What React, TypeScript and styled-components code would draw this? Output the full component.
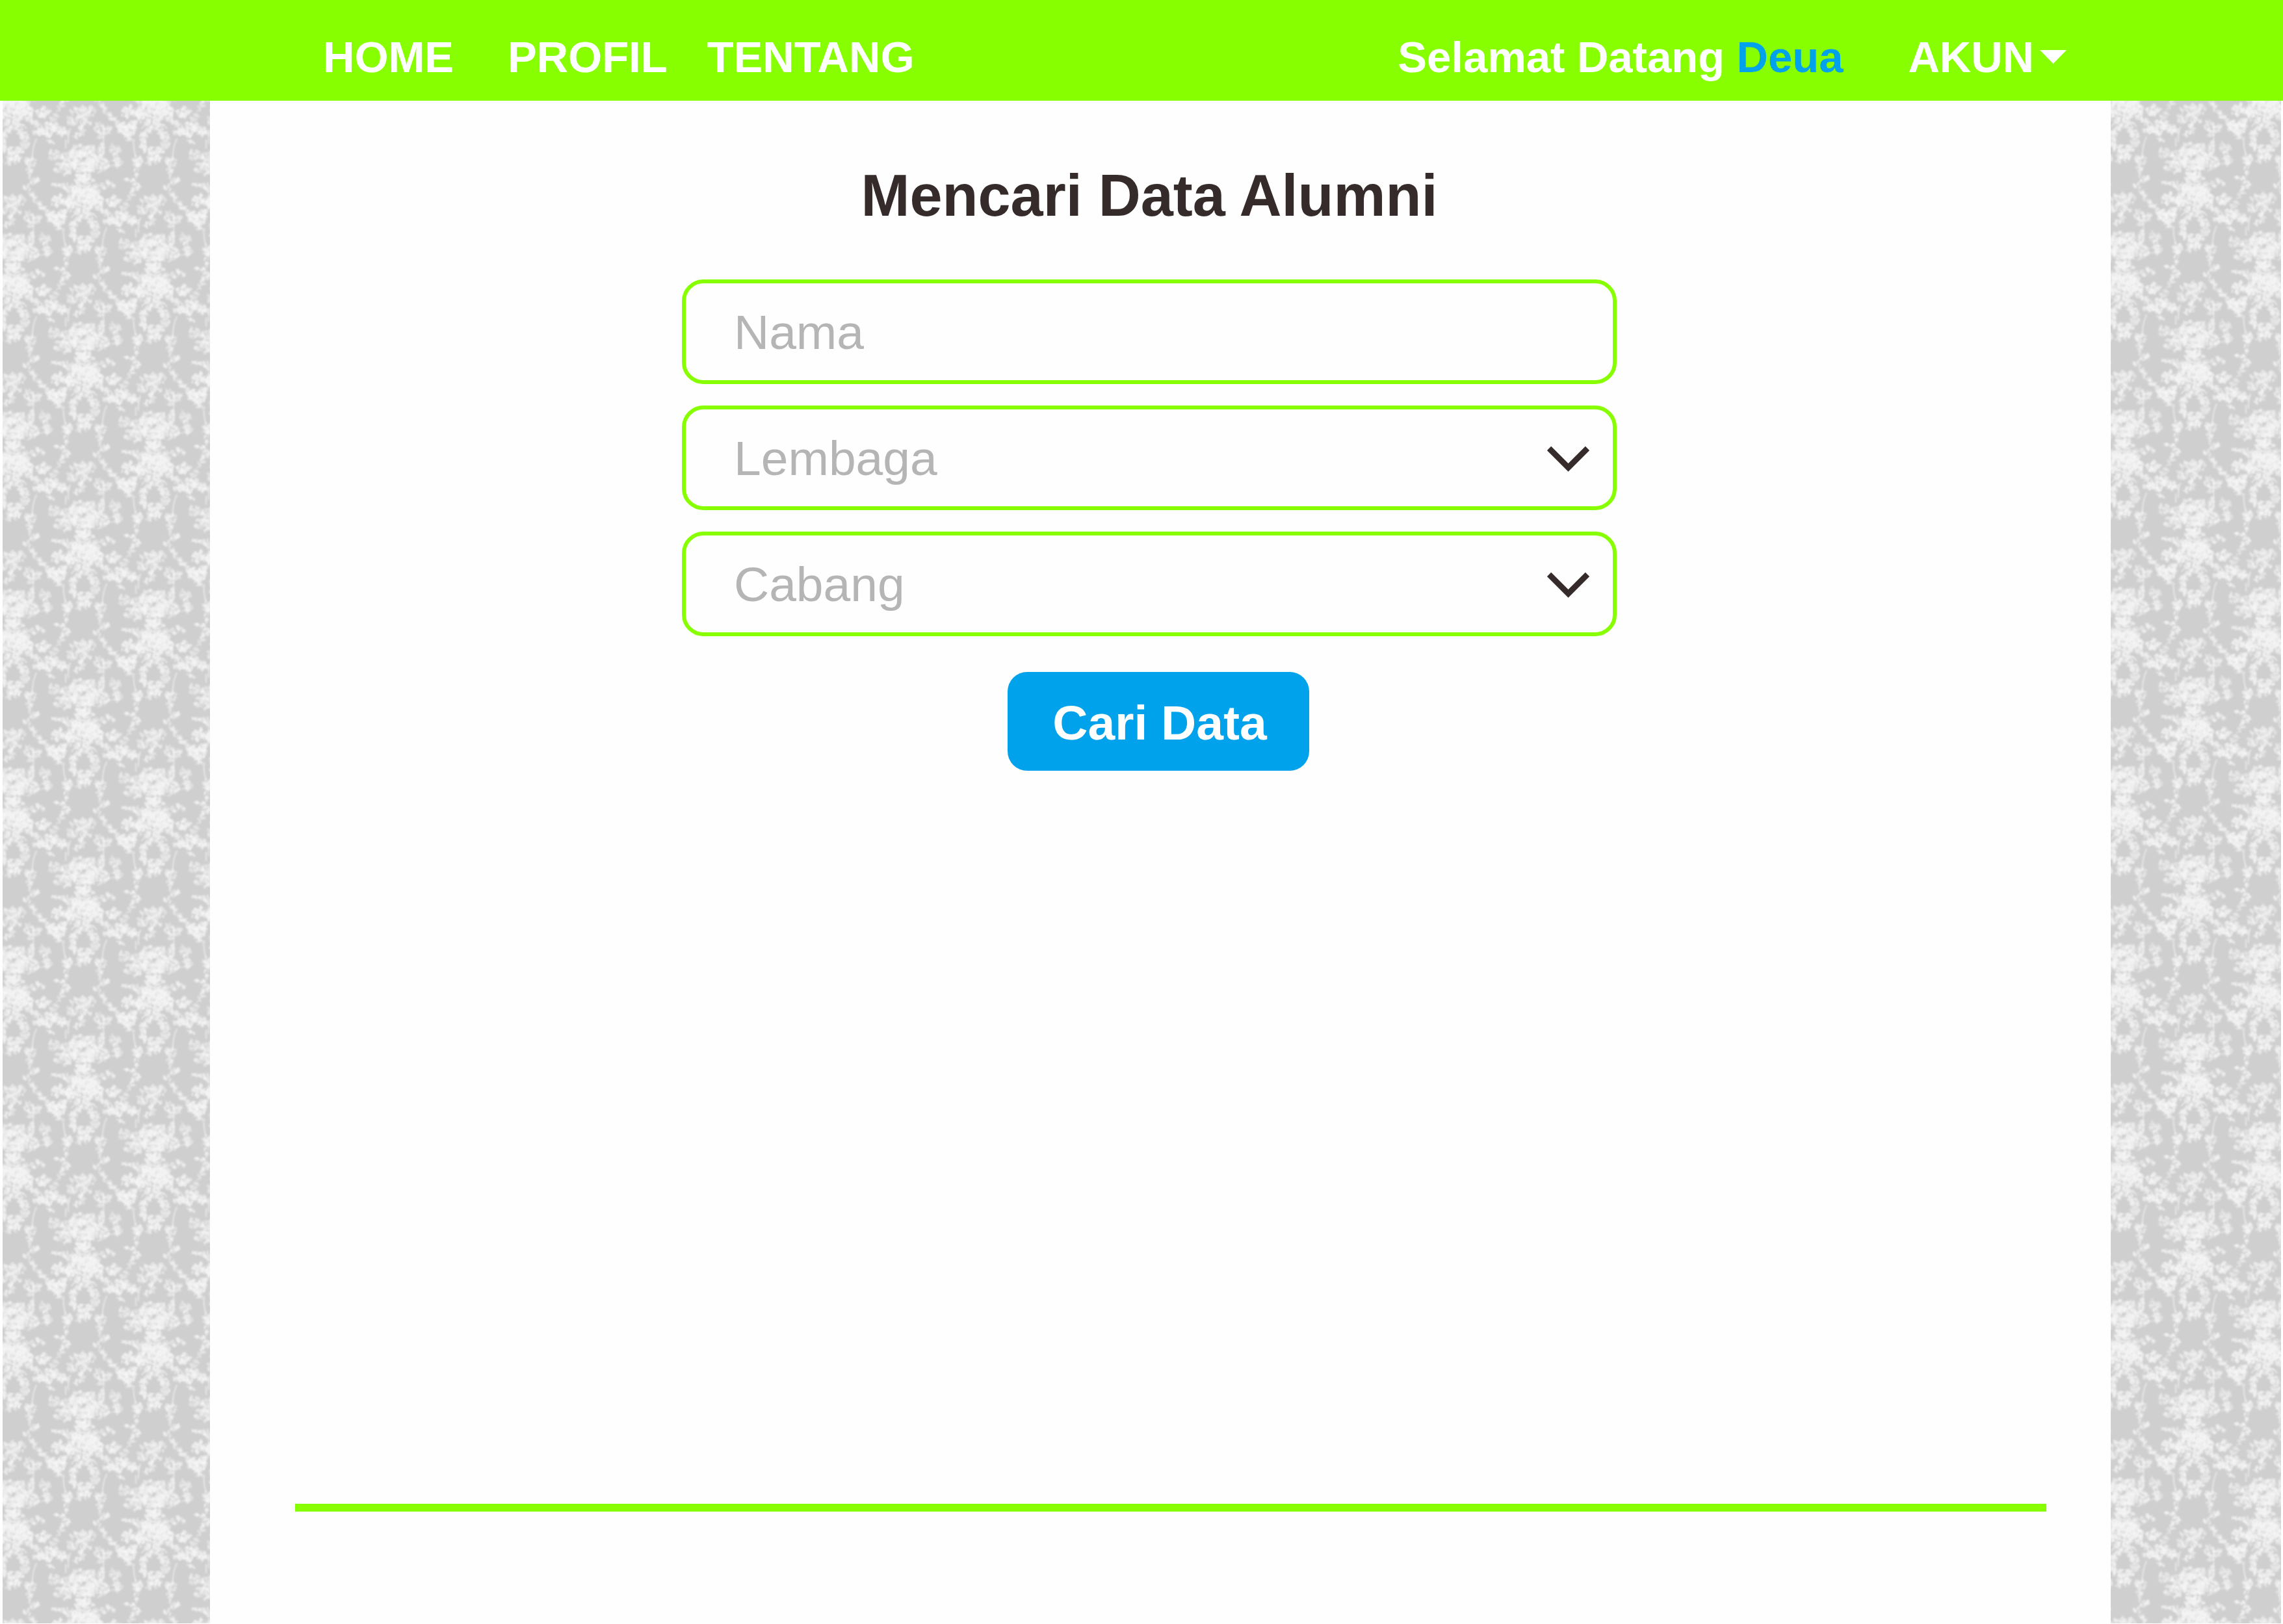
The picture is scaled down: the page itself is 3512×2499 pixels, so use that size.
import React, { useId } from "react";
import styled, { createGlobalStyle } from "styled-components";

const green = "#88ff00";
const blue = "#00a2ec";
const ink = "#352b2a";
const paper = "#fefefe";

const GlobalStyle = createGlobalStyle`
  *, *::before, *::after { box-sizing: border-box; }
  html, body { margin: 0; padding: 0; background: ${paper}; }
  body, button, input, select { font-family: "Liberation Sans", Arial, sans-serif; }
`;

const Page = styled.div`
  min-height: 100vh;
  display: flex;
  flex-direction: column;
`;

const Header = styled.header`
  display: flex;
  justify-content: space-between;
  align-items: center;
  height: 155px;
  padding: 20px 333px 0 497px;
  background: ${green};
  color: #ffffff;
  font-size: 67px;
  line-height: 76px;
  font-weight: 700;
`;

const Nav = styled.nav`
  display: flex;
`;

const NavLink = styled.a<{ $gap: number }>`
  margin-right: ${(p) => p.$gap}px;
  color: inherit;
  text-decoration: none;
`;

const Account = styled.div`
  display: flex;
  align-items: center;
  gap: 100px;
`;

const Greeting = styled.p`
  margin: 0;
  white-space: nowrap;
`;

const UserName = styled.span`
  color: ${blue};
`;

const AccountButton = styled.button`
  display: flex;
  align-items: center;
  gap: 9px;
  padding: 0;
  border: 0;
  background: none;
  color: inherit;
  font-size: inherit;
  font-weight: inherit;
  line-height: inherit;
  cursor: pointer;
`;

const Caret = styled.svg`
  display: block;
  width: 41px;
  height: 21px;
`;

const Body = styled.div`
  flex: 1;
  display: grid;
  grid-template-columns: 319px minmax(0, 1fr) 262px;
  padding: 0 3px 1px 4px;
`;

const Wallpaper = styled.div`
  display: grid;
  height: 100%;
  overflow: hidden;
  background: #cfcfcf;
`;

const WallpaperArt = styled.svg`
  display: block;
  width: 100%;
  height: 100%;
`;

const Content = styled.main`
  display: flex;
  flex-direction: column;
  align-items: center;
  padding: 94px 6px 0 0;
`;

const SearchForm = styled.form`
  display: flex;
  flex-direction: column;
  align-items: center;
  width: 100%;
`;

const FormBody = styled.div`
  width: 100%;
  display: flex;
  flex-direction: column;
  align-items: center;
  gap: 33px;
  padding-right: 28px;
`;

const Title = styled.h1`
  margin: 0;
  padding-bottom: 44px;
  color: ${ink};
  font-size: 90px;
  line-height: 104px;
  font-weight: 700;
`;

const Field = styled.div`
  display: grid;
  align-items: center;
  width: 100%;
  max-width: 1438px;
  height: 161px;
`;

const controlStyle = `
  grid-area: 1 / 1;
  width: 100%;
  height: 100%;
  margin: 0;
  padding: 0 74px;
  border: 6px solid ${green};
  border-radius: 33px;
  outline: 0;
  background: transparent;
  font-size: 75px;
`;

const TextInput = styled.input`
  ${controlStyle}
  color: ${ink};
  &::placeholder { color: #b5b5b5; opacity: 1; }
`;

const Select = styled.select`
  ${controlStyle}
  appearance: none;
  color: #b5b5b5;
  cursor: pointer;
`;

const Chevron = styled.svg`
  grid-area: 1 / 1;
  justify-self: end;
  width: 65px;
  height: 42px;
  margin-right: 42px;
  pointer-events: none;
`;

const SubmitButton = styled.button`
  width: 464px;
  height: 152px;
  margin-top: 55px;
  padding: 4px 0 0 4px;
  border: 0;
  border-radius: 30px;
  background: ${blue};
  color: #ffffff;
  font-size: 75px;
  font-weight: 700;
  cursor: pointer;
`;

const Footer = styled.footer`
  align-self: stretch;
  margin-top: auto;
  padding: 0 93px 172px 131px;
`;

const FooterRule = styled.hr`
  height: 12px;
  margin: 0;
  border: 0;
  background: ${green};
`;

type Cluster = [x: number, y: number, rx: number, ry: number, light: number];

/* Flower masses of one bouquet; the tile is 648 by 822 units with a half drop. */
const clusters: Cluster[] = [
  [325, 45, 52, 26, 0.5], [260, 90, 44, 34, 0.5], [240, 135, 26, 26, 0.45],
  [320, 100, 66, 42, 0.6], [385, 110, 52, 38, 0.5], [405, 50, 14, 38, 0.35],
  [468, 48, 22, 26, 0.35], [470, 104, 28, 26, 0.4], [204, 128, 24, 20, 0.45],
  [172, 58, 14, 10, 0.5], [200, 66, 12, 16, 0.5], [182, 88, 16, 10, 0.5],
  [325, 160, 34, 26, 0.6], [325, 215, 52, 46, 0.75], [325, 262, 66, 34, 0.75],
  [322, 292, 84, 22, 0.7], [252, 300, 20, 32, 0.55], [398, 296, 20, 36, 0.55],
  [270, 240, 18, 34, 0.5], [384, 240, 18, 34, 0.5], [325, 335, 42, 28, 0.55],
  [190, 207, 14, 5, 0.5], [220, 210, 16, 6, 0.5], [243, 216, 12, 16, 0.5],
  [415, 216, 16, 14, 0.45], [440, 200, 14, 12, 0.5], [460, 210, 10, 6, 0.5],
  [200, 285, 26, 26, 0.75], [220, 268, 12, 14, 0.6], [455, 285, 24, 26, 0.75],
  [480, 288, 12, 14, 0.5], [176, 358, 28, 28, 0.9], [212, 366, 28, 28, 0.85],
  [196, 392, 22, 14, 0.7], [225, 335, 18, 18, 0.5], [440, 375, 24, 16, 0.8],
  [480, 358, 30, 26, 0.9], [478, 388, 18, 12, 0.7], [425, 335, 18, 16, 0.5],
  [514, 350, 14, 22, 0.5], [545, 372, 20, 18, 0.5], [570, 380, 9, 7, 0.4],
  [495, 420, 12, 12, 0.45], [216, 415, 14, 10, 0.4],
  [276, 400, 17, 22, 0.65], [274, 432, 17, 20, 0.65], [296, 458, 20, 16, 0.65],
  [325, 468, 22, 20, 0.7], [354, 458, 20, 16, 0.65], [376, 432, 17, 20, 0.65],
  [374, 400, 17, 22, 0.65], [356, 374, 16, 14, 0.5], [294, 374, 16, 14, 0.5],
  [325, 492, 28, 14, 0.6], [302, 512, 14, 12, 0.6], [340, 508, 14, 16, 0.6],
  [245, 510, 24, 22, 0.6], [243, 545, 12, 18, 0.55], [242, 575, 6, 10, 0.5],
  [200, 592, 14, 6, 0.5], [224, 606, 18, 12, 0.55], [250, 628, 12, 16, 0.5],
  [232, 640, 14, 8, 0.4], [222, 662, 10, 12, 0.5], [208, 684, 9, 14, 0.5],
  [196, 708, 12, 10, 0.5], [180, 728, 14, 12, 0.5],
  [401, 510, 22, 24, 0.6], [398, 545, 14, 16, 0.55], [396, 575, 8, 12, 0.5],
  [440, 594, 16, 7, 0.5], [412, 606, 20, 14, 0.55], [386, 630, 14, 12, 0.5],
  [404, 654, 12, 14, 0.5], [420, 680, 9, 14, 0.5], [436, 708, 12, 12, 0.5],
  [456, 728, 16, 12, 0.5], [476, 742, 10, 8, 0.4],
  [285, 688, 24, 14, 0.5], [320, 678, 14, 16, 0.5], [350, 690, 24, 22, 0.5],
  [318, 704, 24, 14, 0.45], [270, 732, 26, 20, 0.45], [334, 740, 24, 18, 0.6],
  [302, 728, 18, 12, 0.4], [308, 782, 20, 22, 0.55], [290, 800, 16, 14, 0.45],
  [395, 768, 22, 24, 0.35], [432, 776, 20, 18, 0.35], [400, 802, 14, 18, 0.3],
  [210, 776, 14, 14, 0.45], [228, 790, 18, 14, 0.45],
];

const stems = [
  "M230 425 Q230 460 240 490", "M430 405 Q412 440 410 490",
  "M262 770 Q250 800 252 840", "M240 0 V40", "M495 395 L520 340",
  "M150 0 Q170 10 190 20", "M415 770 V880",
  "M350 338 Q370 340 384 360", "M300 338 Q280 340 266 360",
];

function makeRandom(start: number) {
  let state = start;
  return () => {
    state = (state * 1664525 + 1013904223) % 4294967296;
    return state / 4294967296;
  };
}

type Petal = { x: number; y: number; rx: number; ry: number; turn: number; fill: string; alpha: number };

function growPetals(): Petal[] {
  const random = makeRandom(29);
  const petals: Petal[] = [];
  clusters.forEach(([cx, cy, rx, ry, light]) => {
    const count = Math.max(7, Math.round((rx * ry) / 18));
    for (let i = 0; i < count; i += 1) {
      const angle = random() * Math.PI * 2;
      const reach = Math.sqrt(random()) * 1.08;
      const shaded = random() < 0.14;
      petals.push({
        x: Math.round(cx + Math.cos(angle) * reach * rx),
        y: Math.round(cy + Math.sin(angle) * reach * ry),
        rx: shaded ? 6 : 7 + Math.round(random() * 4),
        ry: shaded ? 3 : 4 + Math.round(random() * 3),
        turn: Math.round(random() * 180),
        fill: shaded ? "#d8d8d8" : "#f5f5f5",
        alpha: shaded ? 0.5 : 0.2 + light * 0.4,
      });
    }
  });
  return petals;
}

const petals = growPetals();

const repeats = [
  [0, 0], [-648, 0], [648, 0], [0, -822], [0, 822],
  [-324, -411], [324, -411], [-324, 411], [324, 411],
];

function DamaskWallpaper({ x, y }: { x: number; y: number }) {
  const id = useId().replace(/[^a-zA-Z0-9]/g, "");
  return (
    <Wallpaper aria-hidden="true">
      <WallpaperArt>
        <defs>
          <filter id={`${id}soft`} filterUnits="userSpaceOnUse" x="-20" y="-20" width="688" height="862" colorInterpolationFilters="sRGB">
            <feGaussianBlur stdDeviation="3" />
          </filter>
          <g id={`${id}bouquet`}>
            {stems.map((d) => (
              <path key={d} d={d} fill="none" stroke="#f2f2f2" strokeOpacity="0.6" strokeWidth="7" />
            ))}
            {petals.map((p, i) => (
              <ellipse
                key={i}
                rx={p.rx}
                ry={p.ry}
                fill={p.fill}
                fillOpacity={p.alpha}
                transform={`translate(${p.x} ${p.y}) rotate(${p.turn})`}
              />
            ))}
          </g>
          <pattern id={`${id}tile`} x={x} y={y} width="216" height="274" viewBox="0 0 648 822" patternUnits="userSpaceOnUse">
            <rect width="648" height="822" fill="#cfcfcf" />
            <g filter={`url(#${id}soft)`}>
              {repeats.map(([dx, dy]) => (
                <use key={`${dx},${dy}`} href={`#${id}bouquet`} x={dx} y={dy} />
              ))}
            </g>
          </pattern>
        </defs>
        <rect width="100%" height="100%" fill={`url(#${id}tile)`} />
      </WallpaperArt>
    </Wallpaper>
  );
}

function SelectField({ id, label }: { id: string; label: string }) {
  return (
    <Field>
      <Select id={id} name={id} aria-label={label} defaultValue="">
        <option value="">{label}</option>
      </Select>
      <Chevron viewBox="0 0 65 42" aria-hidden="true">
        <path d="M3 6 L32.5 35.5 L62 6" fill="none" stroke={ink} strokeWidth="9" />
      </Chevron>
    </Field>
  );
}

const links = [
  { label: "HOME", gap: 83 },
  { label: "PROFIL", gap: 61 },
  { label: "TENTANG", gap: 0 },
];

export default function App() {
  return (
    <>
      <GlobalStyle />
      <Page>
        <Header>
          <Nav>
            {links.map((link) => (
              <NavLink key={link.label} href="#" $gap={link.gap}>
                {link.label}
              </NavLink>
            ))}
          </Nav>
          <Account>
            <Greeting>
              Selamat Datang <UserName>Deua</UserName>
            </Greeting>
            <AccountButton type="button">
              AKUN
              <Caret viewBox="0 0 41 21" aria-hidden="true">
                <path d="M0 0 H41 L20.5 21 Z" fill="#ffffff" />
              </Caret>
            </AccountButton>
          </Account>
        </Header>
        <Body>
          <DamaskWallpaper x={17} y={60} />
          <Content>
            <SearchForm onSubmit={(event) => event.preventDefault()}>
              <FormBody>
                <Title>Mencari Data Alumni</Title>
                <Field>
                  <TextInput id="nama" name="nama" type="text" aria-label="Nama" placeholder="Nama" />
                </Field>
                <SelectField id="lembaga" label="Lembaga" />
                <SelectField id="cabang" label="Cabang" />
              </FormBody>
              <SubmitButton type="submit">Cari Data</SubmitButton>
            </SearchForm>
            <Footer>
              <FooterRule />
            </Footer>
          </Content>
          <DamaskWallpaper x={20} y={57} />
        </Body>
      </Page>
    </>
  );
}
